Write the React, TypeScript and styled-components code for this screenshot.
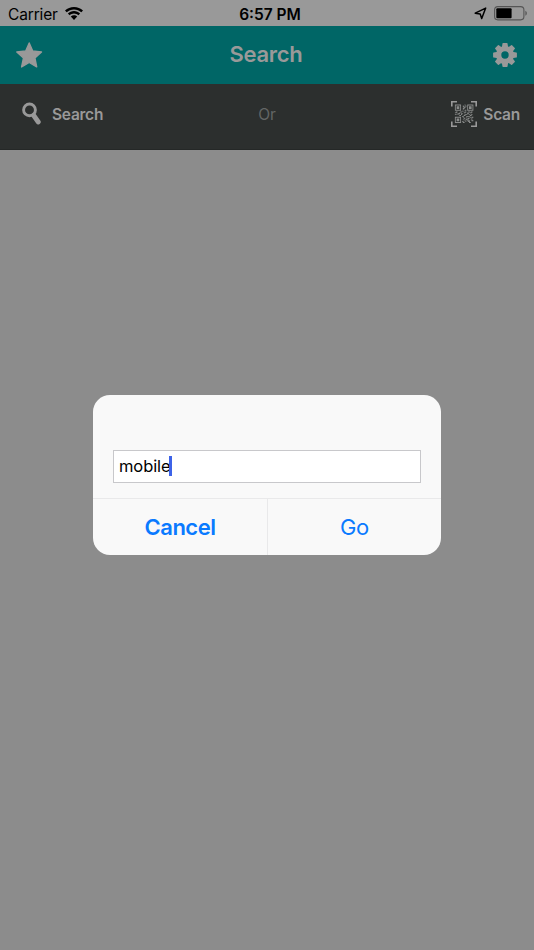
import { ReactNode } from "react";
import styled, { createGlobalStyle } from "styled-components";


// 21x21 matrix of the scan icon
const QR_ROWS = [
    "111111100001001111111",
    "100000100100101000001",
    "101110100110101011101",
    "101110100011001011101",
    "101110100110001011101",
    "100000100100001000001",
    "111111100001101111111",
    "000000001100000000000",
    "011000110001100110110",
    "110001000011001001100",
    "000111011000001100000",
    "110100010001110010110",
    "000001100011000001100",
    "000000001100011110000",
    "111111100100010001011",
    "100000100011000110110",
    "101110100010011100000",
    "101110100100110000110",
    "101110100001001110011",
    "100000101100100110000",
    "111111100110000011000",
];

const QR_PATH = QR_ROWS.map((row, y) =>
    row.split("").map((cell, x) => (cell === "1" ? `M${x} ${y}h1v1h-1z` : "")).join("")
).join("");


// icons
const WifiIcon = () => (
    <svg width="18" height="13" viewBox="0 0 18 13" fill="#000">
        <path d="M9 0C5.5 0 2.400 1.300 0 3.500L1.700 5.300C3.600 3.500 6.200 2.400 9 2.400s5.400 1.100 7.300 2.900L18 3.500C15.600 1.300 12.500 0 9 0z" />
        <path d="M9 4.100c-2.400 0-4.500.9-6.100 2.400l1.700 1.800C5.800 7.200 7.300 6.500 9 6.500s3.200.7 4.400 1.800l1.700-1.800C13.500 5 11.400 4.100 9 4.100z" />
        <path d="M9 8.200c-1.200 0-2.300.5-3.200 1.300L9 13l3.200-3.500C11.300 8.700 10.200 8.200 9 8.200z" />
    </svg>
);

const LocationIcon = () => (
    <svg width="13" height="13" viewBox="0 0 13 13" fill="none" stroke="#000" strokeWidth="1.5" strokeLinejoin="round">
        <path d="M11.700 1.100L1.200 6.200l5 .9 1.500 4.500z" />
    </svg>
);

const BatteryIcon = () => (
    <svg width="34" height="15" viewBox="0 0 34 15">
        <rect x="0.600" y="0.600" width="29.300" height="13.300" rx="3.300" fill="none" stroke="#555" strokeWidth="1.100" />
        <rect x="2.300" y="2.300" width="15.300" height="10" rx="1" fill="#000" />
        <path d="M31.400 4.800c1.900.8 1.900 4.200 0 5z" fill="#555" />
    </svg>
);

const StarIcon = () => (
    <svg width="28" height="27" viewBox="0 0 28 27" fill="#999" stroke="#999" strokeWidth="1.400" strokeLinejoin="round">
        <path d="M14.200 1l3.500 8 8.800.9-6.600 6 1.800 9-7.500-4.400-7.600 4.400 1.900-9-6.700-6 8.900-.9z" />
    </svg>
);

const GearIcon = () => (
    <svg width="24" height="24" viewBox="-12 -12 24 24">
        <g fill="#999">
            {[0, 45, 90, 135, 180, 225, 270, 315].map((angle) => (
                <path key={angle} transform={`rotate(${angle})`} d="M-3.200-7l.6-4.300q.1-.6.700-.6h3.800q.6 0 .7.600l.6 4.300z" />
            ))}
        </g>
        <circle r="6.400" fill="none" stroke="#999" strokeWidth="5.400" />
    </svg>
);

const SearchIcon = () => (
    <svg width="20" height="23" viewBox="0 0 20 23" fill="none" stroke="#999">
        <circle cx="7.500" cy="7.900" r="5.900" strokeWidth="2.900" />
        <path d="M11.800 13.600l4.400 6.300" strokeWidth="5" strokeLinecap="round" />
    </svg>
);

const ScanIcon = () => (
    <svg width="26" height="26" viewBox="0 0 26 26">
        <path d="M.8 5.500V.8H6M20 .8h5.200v4.700M25.200 20.500v4.700H20M6 25.200H.8v-4.700" fill="none" stroke="#999" strokeWidth="1.600" />
        <path d={QR_PATH} transform="translate(3.900 3.500) scale(.88)" fill="#8b8d8c" />
    </svg>
);


interface ToolButtonProps {
    icon: ReactNode;
    label: string;
    gap: number;
}

function ToolButton({ icon, label, gap }: ToolButtonProps) {
    return (
        <ToolButtonWrapper $gap={gap}>
            {icon}
            <ToolLabel>{label}</ToolLabel>
        </ToolButtonWrapper>
    );
}


export default function App() {
    // render
    return (
        <Wrapper>
            <GlobalStyle />
            <StatusBar>
                <StatusSide><Carrier>Carrier</Carrier><WifiIcon /></StatusSide>
                <Clock>6:57 PM</Clock>
                <StatusSide $end><LocationIcon /><BatteryIcon /></StatusSide>
            </StatusBar>
            <NavBar>
                <StarIcon />
                <NavTitle>Search</NavTitle>
                <GearIcon />
            </NavBar>
            <ToolBar>
                <ToolButton icon={<SearchIcon />} label="Search" gap={10} />
                <OrText>Or</OrText>
                <ToolButton icon={<ScanIcon />} label="Scan" gap={6} />
            </ToolBar>
            <DialogLayer>
                <Dialog role="dialog">
                    <DialogBody>
                        <InputBox>mobile<Caret /></InputBox>
                    </DialogBody>
                    <DialogActions>
                        <DialogButton $bold>Cancel</DialogButton>
                        <DialogButton>Go</DialogButton>
                    </DialogActions>
                </Dialog>
            </DialogLayer>
        </Wrapper>
    );
}


const GlobalStyle = createGlobalStyle`
    * {
        box-sizing: border-box;
    }

    body {
        margin: 0;
        font-family: Inter, "Liberation Sans", sans-serif;
    }

    svg {
        display: block;
        flex-shrink: 0;
    }
`;

const Wrapper = styled.div`
    position: relative;
    height: 950px;
    width: 100%;
    overflow: hidden;
    background-color: #8c8c8c;
`;

const StatusBar = styled.div`
    height: 26px;
    padding: 1px 6px 0 8px;
    display: grid;
    grid-template-columns: 1fr auto 1fr;
    align-items: center;
    background-color: #999;
    color: #000;
    font-size: 15.5px;
`;

const StatusSide = styled.div<{ $end?: boolean }>`
    display: flex;
    align-items: center;
    justify-content: ${({ $end }) => ($end ? "flex-end" : "flex-start")};
    gap: 7px;
`;

const Carrier = styled.span`
    padding-top: 2px;
    letter-spacing: -0.15px;
`;

const Clock = styled.div`
    padding: 2px 0 0 4px;
    font-size: 15.5px;
    font-weight: 600;
`;

const NavBar = styled.div`
    height: 58px;
    padding: 0 17px 0 15px;
    display: grid;
    grid-template-columns: 1fr auto 1fr;
    align-items: center;
    background-color: #006666;

    > :last-child {
        justify-self: end;
    }
`;

const NavTitle = styled.h1`
    margin: 0;
    padding-bottom: 2px;
    color: #999;
    font-size: 22px;
    font-weight: 600;
    letter-spacing: -0.3px;
`;

const ToolBar = styled.div`
    height: 66px;
    padding: 0 14px 6px 22px;
    display: grid;
    grid-template-columns: 1fr auto 1fr;
    align-items: center;
    border-bottom: 1px solid #252827;
    background-color: #2c2f2e;

    > :last-child {
        justify-self: end;
    }
`;

const ToolButtonWrapper = styled.div<{ $gap: number }>`
    display: flex;
    align-items: center;
    gap: ${({ $gap }) => $gap}px;
    color: #999;
    font-size: 15.5px;
    font-weight: 600;
`;

const ToolLabel = styled.span`
    padding-top: 2px;
    letter-spacing: -0.25px;
`;

const OrText = styled.span`
    padding: 2px 8px 0 0;
    color: #636665;
    font-size: 15.5px;
    letter-spacing: -0.2px;
`;

const DialogLayer = styled.div`
    position: absolute;
    inset: 0;
    display: flex;
    justify-content: center;
    align-items: center;
`;

const Dialog = styled.div`
    width: 348px;
    height: 160px;
    display: flex;
    flex-direction: column;
    border-radius: 17px;
    overflow: hidden;
    background-color: #f9f9f9;
`;

const DialogBody = styled.div`
    flex: 1;
    padding: 55px 20px 0;
`;

const InputBox = styled.div`
    height: 33px;
    padding: 0 0 2px 5px;
    display: flex;
    align-items: center;
    border: 1px solid #c8c8cb;
    background-color: #fff;
    color: #000;
    font-size: 16.5px;
    letter-spacing: -0.1px;
`;

const Caret = styled.span`
    width: 2.5px;
    height: 20px;
    margin-left: -1px;
    background-color: #3d63e8;
`;

const DialogActions = styled.div`
    height: 57px;
    display: grid;
    grid-template-columns: 1fr 1fr;
    border-top: 1px solid #e9e9ea;
`;

const DialogButton = styled.button<{ $bold?: boolean }>`
    padding: 0;
    border: none;
    background: none;
    color: #0a7aff;
    font-family: inherit;
    font-size: 22px;
    font-weight: ${({ $bold }) => ($bold ? 600 : 400)};
    letter-spacing: ${({ $bold }) => ($bold ? "-0.5px" : "-0.4px")};

    & + & {
        border-left: 1px solid #e9e9ea;
    }
`;
